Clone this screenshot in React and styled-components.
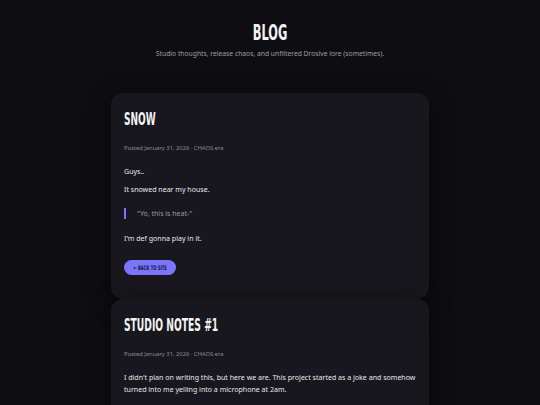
import React from "react";
import styled, { createGlobalStyle } from "styled-components";

const Global = createGlobalStyle`
  html, body { margin: 0; padding: 0; background: #0e0e11; }
  body { font-family: "Noto Sans", "Open Sans", sans-serif; color: #e4e4ea; }
  * { box-sizing: border-box; }
`;

const Page = styled.div`
  min-height: 405px;
  background: #0e0e11;
  padding-top: 18px;
  display: flex;
  flex-direction: column;
  align-items: center;
`;

const Header = styled.header`
  display: flex;
  flex-direction: column;
  align-items: center;
  margin-bottom: 33px;
`;

const Display = styled.span`
  display: inline-block;
  font-family: "Liberation Sans Narrow", "DejaVu Sans Condensed", "Liberation Sans", sans-serif;
  font-weight: 700;
  text-transform: uppercase;
  color: #f3f3f5;
  transform: scaleX(${(p) => p.$sx || 0.6});
  transform-origin: ${(p) => p.$origin || "left center"};
  white-space: nowrap;
`;

const PageTitle = styled.h1`
  margin: 0;
  font-size: 22px;
  line-height: 26px;
  height: 26px;
`;

const Subtitle = styled.p`
  margin: 4px 0 0;
  font-size: 6.75px;
  line-height: 12px;
  color: #9c9ca8;
`;

const Feed = styled.main`
  width: 318px;
  display: flex;
  flex-direction: column;
  gap: 0;
`;

const Card = styled.article`
  background: #17171d;
  border-radius: 12px;
  padding: 16px 13px ${(p) => p.$pb || 24}px;
  box-shadow: 0 6px 22px rgba(0, 0, 0, 0.55);
  display: flex;
  flex-direction: column;
  align-items: flex-start;
`;

const PostTitle = styled.h2`
  margin: 0;
  font-size: 17px;
  line-height: 20px;
  height: 20px;
`;

const Meta = styled.div`
  margin-top: 14px;
  font-size: 5.8px;
  line-height: 10px;
  color: #8b8b97;
`;

const Body = styled.div`
  margin-top: 12px;
  display: flex;
  flex-direction: column;
  gap: 6px;
  width: 100%;
`;

const Para = styled.p`
  margin: 0;
  font-size: 7.05px;
  line-height: 12px;
  color: #e8e8ec;
`;

const Quote = styled.blockquote`
  margin: 7px 0;
  border-left: 2px solid #7c74ff;
  padding: 0 0 0 11px;
  font-size: 7px;
  line-height: 11px;
  color: #9a9aa6;
`;

const Button = styled.a`
  margin-top: 16px;
  height: 15px;
  width: 52px;
  border-radius: 8px;
  background: #7c74ff;
  display: flex;
  align-items: center;
  justify-content: center;
  text-decoration: none;
  font-size: 6.3px;
  line-height: 15px;
`;

const ButtonLabel = styled(Display)`
  color: #17172a;
`;

export default function App() {
  return (
    <>
      <Global />
      <Page>
        <Header>
          <PageTitle>
            <Display $origin="center center" $sx={0.575}>Blog</Display>
          </PageTitle>
          <Subtitle>Studio thoughts, release chaos, and unfiltered Drosive lore (sometimes).</Subtitle>
        </Header>
        <Feed>
          <Card>
            <PostTitle>
              <Display $sx={0.59}>Snow</Display>
            </PostTitle>
            <Meta>Posted January 31, 2026 · CHAOS era</Meta>
            <Body>
              <Para>Guys..</Para>
              <Para>It snowed near my house.</Para>
              <Quote>"Yo, this is heat-"</Quote>
              <Para>I'm def gonna play in it.</Para>
            </Body>
            <Button href="#">
              <ButtonLabel $origin="center center" $sx={0.66}>← Back to site</ButtonLabel>
            </Button>
          </Card>
          <Card>
            <PostTitle>
              <Display $sx={0.6}>Studio Notes #1</Display>
            </PostTitle>
            <Meta>Posted January 31, 2026 · CHAOS era</Meta>
            <Body>
              <Para>
                I didn't plan on writing this, but here we are. This project started as a joke and somehow
                turned into me yelling into a microphone at 2am.
              </Para>
            </Body>
          </Card>
        </Feed>
      </Page>
    </>
  );
}
